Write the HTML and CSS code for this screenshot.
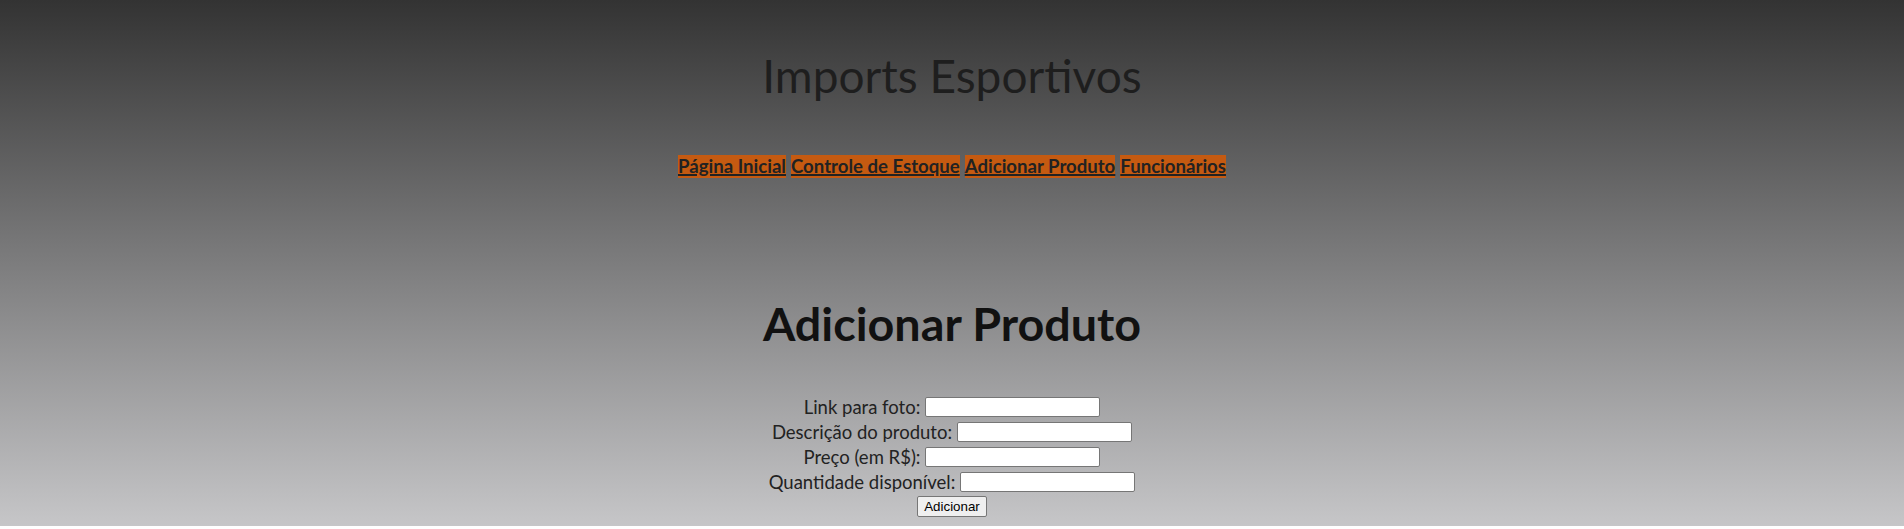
FILE: index.html
```html
<!DOCTYPE html>
<html lang="pt-BR">
<head>
<meta charset="utf-8">
<title>Imports Esportivos</title>
<link rel="stylesheet" href="styles.css">
</head>
<body>
<div class="page">
  <header class="header">
    <h1 class="site-title">Imports Esportivos</h1>
    <nav class="nav">
      <a class="nav-link" href="#">Página Inicial</a>
      <a class="nav-link" href="#">Controle de Estoque</a>
      <a class="nav-link" href="#">Adicionar Produto</a>
      <a class="nav-link" href="#">Funcionários</a>
    </nav>
  </header>
  <main class="content">
    <h2 class="page-title">Adicionar Produto</h2>
    <form class="product-form">
      <div class="form-row"><label class="form-label">Link para foto:</label><input class="form-input" type="text"></div>
      <div class="form-row"><label class="form-label">Descrição do produto:</label><input class="form-input" type="text"></div>
      <div class="form-row"><label class="form-label">Preço (em R$):</label><input class="form-input" type="text"></div>
      <div class="form-row"><label class="form-label">Quantidade disponível:</label><input class="form-input" type="text"></div>
      <div class="form-row"><button class="form-button" type="button">Adicionar</button></div>
    </form>
  </main>
</div>
</body>
</html>
```

FILE: styles.css
```css
html {
  background: #ffffff;
}
body {
  margin: 0;
  font-family: "Lato", "Open Sans", sans-serif;
  color: #222222;
}
.page {
  background: linear-gradient(to bottom, #333333 0%, #c6c6c8 100%);
  height: 526px;
  display: flex;
  flex-direction: column;
  align-items: center;
}
.header {
  display: flex;
  flex-direction: column;
  align-items: center;
}
.site-title {
  margin: 48px 0 0 0;
  font-size: 46px;
  line-height: 56px;
  font-weight: 400;
  color: #1e1e1e;
}
.nav {
  margin-top: 51px;
  display: flex;
  gap: 5px;
}
.nav-link {
  background: #c55a11;
  color: #222222;
  font-weight: 700;
  font-size: 18.6px;
  line-height: 23px;
  text-decoration: underline;
  text-decoration-thickness: 2px;
}
.content {
  display: flex;
  flex-direction: column;
  align-items: center;
}
.page-title {
  margin: 117px 0 0 0;
  font-size: 46.7px;
  line-height: 56px;
  font-weight: 700;
  color: #111111;
}
.product-form {
  margin-top: 43px;
  display: flex;
  flex-direction: column;
  align-items: center;
}
.form-row {
  display: flex;
  align-items: center;
  height: 25px;
  gap: 5px;
}
.form-label {
  font-size: 18.5px;
  color: #222222;
}
.form-input {
  width: 175px;
  height: 20px;
  box-sizing: border-box;
  border: 1px solid #767676;
  border-radius: 2px;
  background: #ffffff;
  padding: 1px 2px;
  margin: 0;
}
.form-button {
  font-family: "Liberation Sans", Arial, sans-serif;
  font-size: 13.33px;
  height: 21px;
  padding: 1px 6px;
  border: 1px solid #767676;
  border-radius: 2px;
  background: #efefef;
  color: #000000;
}
```
